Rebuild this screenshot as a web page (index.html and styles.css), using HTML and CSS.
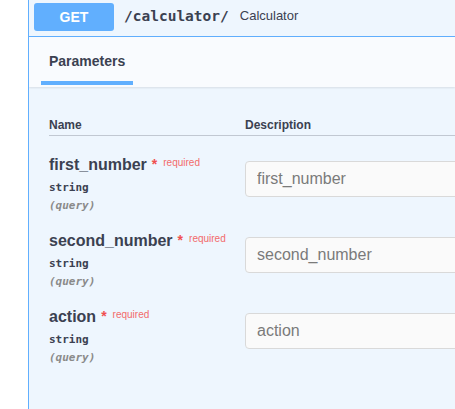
FILE: index.html
```html
<!DOCTYPE html>
<html>
<head>
<meta charset="utf-8">
<link rel="stylesheet" href="styles.css">
</head>
<body>
<div class="opblock">
  <div class="summary">
    <span class="method">GET</span>
    <span class="path">/calculator/</span>
    <span class="desc">Calculator</span>
  </div>
  <div class="section-header">
    <div class="tab"><span class="tab-title">Parameters</span></div>
  </div>
  <div class="table">
    <div class="thead">
      <div class="th">Name</div>
      <div class="th">Description</div>
    </div>
    <div class="row">
      <div class="name-col">
        <div class="pname">first_number<span class="star">*</span><span class="req">required</span></div>
        <div class="ptype">string</div>
        <div class="pin">(query)</div>
      </div>
      <div class="desc-col"><input class="field" type="text" placeholder="first_number"></div>
    </div>
    <div class="row">
      <div class="name-col">
        <div class="pname">second_number<span class="star">*</span><span class="req">required</span></div>
        <div class="ptype">string</div>
        <div class="pin">(query)</div>
      </div>
      <div class="desc-col"><input class="field" type="text" placeholder="second_number"></div>
    </div>
    <div class="row">
      <div class="name-col">
        <div class="pname">action<span class="star">*</span><span class="req">required</span></div>
        <div class="ptype">string</div>
        <div class="pin">(query)</div>
      </div>
      <div class="desc-col"><input class="field" type="text" placeholder="action"></div>
    </div>
  </div>
</div>
</body>
</html>
```
FILE: styles.css
```css
html, body {
  margin: 0;
  padding: 0;
  background: #ffffff;
  overflow: hidden;
  width: 455px;
  height: 409px;
}
body {
  font-family: "Liberation Sans", Arial, sans-serif;
  color: #3b4151;
}
.opblock {
  margin: -3px 0 0 28px;
  width: 427px;
  height: 415px;
  border: 1px solid #61affe;
  border-right: 0;
  border-radius: 4px 0 0 4px;
  background: #eef6fe;
  box-sizing: border-box;
  overflow: hidden;
}
.summary {
  display: flex;
  align-items: center;
  padding: 5px;
  border-bottom: 1px solid #61affe;
}
.method {
  width: 80px;
  height: 28px;
  line-height: 28px;
  text-align: center;
  background: #61affe;
  color: #ffffff;
  font-weight: 700;
  font-size: 14px;
  border-radius: 3px;
}
.path {
  margin: 0 10px;
  font-family: "DejaVu Sans Mono", "Liberation Mono", monospace;
  font-weight: 700;
  font-size: 14.5px;
  color: #3b4151;
  position: relative;
  top: -1px;
}
.desc {
  margin-left: 1px;
  font-size: 13px;
  color: #3b4151;
  position: relative;
  top: -2px;
}
.section-header {
  height: 50px;
  padding: 0 12px;
  background: #f9fbfe;
  box-shadow: 0 1px 2px rgba(0, 0, 0, 0.1);
  display: flex;
  align-items: stretch;
}
.tab {
  display: flex;
  align-items: center;
  padding: 0 8px;
  border-bottom: 4px solid #61affe;
  margin-bottom: 2px;
  box-sizing: border-box;
}
.tab-title {
  font-size: 14px;
  font-weight: 700;
  color: #3b4151;
  position: relative;
  top: 2px;
}
.table {
  padding: 0 0 0 20px;
}
.thead {
  display: grid;
  grid-template-columns: 196px 1fr;
  padding-top: 31px;
  padding-bottom: 3px;
  border-bottom: 1px solid rgba(59, 65, 81, 0.25);
}
.th {
  font-size: 12px;
  font-weight: 700;
  line-height: 14px;
  color: #3b4151;
}
.row {
  display: grid;
  grid-template-columns: 196px 1fr;
  padding: 10px 0 7px;
}
.thead + .row {
  margin-top: 9px;
}
.pname {
  font-size: 16px;
  font-weight: 700;
  line-height: 20px;
  color: #3b4151;
  white-space: nowrap;
}
.star {
  color: #f05050;
  font-size: 14px;
  line-height: 0;
  margin-left: 5px;
  position: relative;
  top: -1px;
}
.req {
  color: #f26b6b;
  font-size: 10px;
  font-weight: 400;
  line-height: 0;
  position: relative;
  top: -4px;
  margin-left: 6px;
}
.ptype {
  margin-top: 4px;
  font-family: "DejaVu Sans Mono", "Liberation Mono", monospace;
  font-size: 11px;
  font-weight: 700;
  line-height: 18px;
  color: #3b4151;
}
.pin {
  margin-top: 1px;
  font-family: "DejaVu Sans Mono", "Liberation Mono", monospace;
  font-size: 11px;
  font-style: italic;
  font-weight: 700;
  line-height: 16px;
  color: #8a8a8a;
}
.desc-col {
  padding-top: 6px;
  overflow: hidden;
}
.field {
  display: block;
  box-sizing: border-box;
  width: calc(100% + 10px);
  height: 36px;
  margin: 0;
  padding: 0 11px;
  border: 1px solid #d9d9d9;
  border-radius: 4px;
  background: #fafafa;
  font-family: "Liberation Sans", Arial, sans-serif;
  font-size: 16px;
  color: #3b4151;
}
.field::placeholder {
  color: #7a7a7a;
}
```
